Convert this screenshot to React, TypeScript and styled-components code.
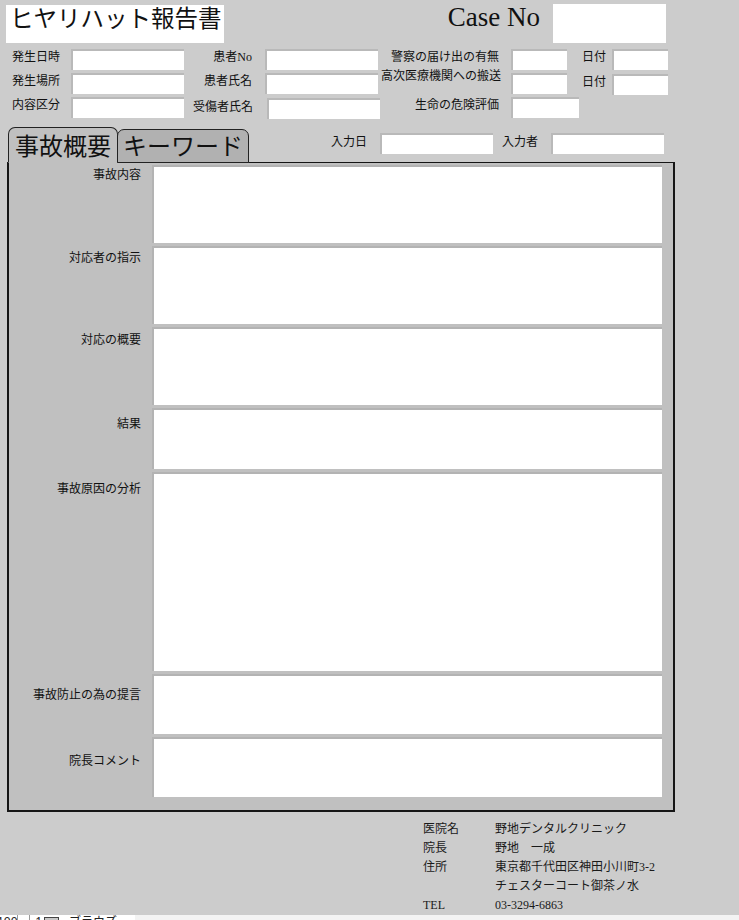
import styled, { createGlobalStyle } from 'styled-components';

const GlobalStyle = createGlobalStyle`
	html, body {
		margin: 0;
		padding: 0;
		height: 920px;
		overflow: hidden;
		background: #cccccc;
	}
	body {
		font-family: "Liberation Serif", "Noto Sans CJK JP", serif;
		color: #111;
	}
`;

const Page = styled.div`
	width: 739px;
	height: 920px;
	overflow: hidden;
`;

const Header = styled.header`
	display: flex;
	align-items: flex-start;
	width: 666px;
	padding-top: 4px;
`;

const TitleBox = styled.h1`
	margin: 1px 0 0 6px;
	width: 218px;
	height: 38px;
	box-sizing: border-box;
	padding: 2px 0 0 4px;
	background: #fff;
	font-size: 23.5px;
	font-weight: normal;
	line-height: 24px;
	white-space: nowrap;
`;

const CaseLabel = styled.span`
	margin-left: auto;
	font-size: 27px;
	line-height: 27px;
	white-space: nowrap;
`;

const CaseBox = styled.div`
	margin-left: 13px;
	width: 113px;
	height: 39px;
	background: #fff;
`;

const FieldGrid = styled.div`
	display: flex;
	flex-direction: column;
	gap: 3px;
	margin-top: 6px;
	padding-left: 12px;
`;

const FieldRow = styled.div`
	display: flex;
	height: 21px;
`;

const Label = styled.span<{ $w: number; $right?: boolean; $pad?: number; $dy?: number }>`
	display: flex;
	justify-content: ${({ $right }) => ($right ? 'flex-end' : 'flex-start')};
	width: ${({ $w }) => $w}px;
	box-sizing: border-box;
	padding-right: ${({ $pad = 0 }) => $pad}px;
	margin-top: ${({ $dy = 0 }) => $dy}px;
	font-size: 12px;
	line-height: 16px;
	white-space: nowrap;
	flex-shrink: 0;
`;

const Input = styled.div<{ $w: number; $dy?: number }>`
	width: ${({ $w }) => $w}px;
	height: 21px;
	margin-top: ${({ $dy = 0 }) => $dy}px;
	box-sizing: border-box;
	background: #fff;
	border-top: 2px solid #b9b9b9;
	border-left: 2px solid #b9b9b9;
	flex-shrink: 0;
`;

const TabRow = styled.div`
	position: relative;
	z-index: 1;
	display: flex;
	align-items: flex-end;
	height: 36px;
	margin-top: 9px;
	margin-bottom: -1px;
	padding-left: 8px;
`;

const Tab = styled.div<{ $active?: boolean; $w: number }>`
	width: ${({ $w }) => $w}px;
	height: ${({ $active }) => ($active ? 36 : 34)}px;
	margin-left: ${({ $active }) => ($active ? 0 : -1)}px;
	box-sizing: border-box;
	padding-top: ${({ $active }) => ($active ? 7 : 5)}px;
	background: ${({ $active }) => ($active ? '#c0c0c0' : '#b1b1b1')};
	border: 1px solid #222;
	border-bottom-color: ${({ $active }) => ($active ? '#c0c0c0' : '#222')};
	border-radius: 7px 7px 0 0;
	text-align: center;
	font-size: 24px;
	line-height: 24px;
	white-space: nowrap;
	flex-shrink: 0;
`;

const TopGroup = styled.div`
	display: flex;
	align-self: flex-start;
	margin-top: 6px;
`;

const Panel = styled.section`
	display: flex;
	flex-direction: column;
	gap: 3px;
	width: 668px;
	margin-left: 7px;
	box-sizing: border-box;
	padding: 2px 11px 13px 0;
	background: #c0c0c0;
	border: 1px solid #151515;
	border-left-width: 2px;
	border-right-width: 2px;
	border-bottom-width: 2px;
`;

const EntryRow = styled.div`
	display: flex;
`;

const EntryLabel = styled.div<{ $dy: number }>`
	width: 143px;
	box-sizing: border-box;
	padding: ${({ $dy }) => $dy}px 11px 0 0;
	text-align: right;
	font-size: 12px;
	line-height: 16px;
	white-space: nowrap;
`;

const EntryBox = styled.div<{ $h: number }>`
	width: 510px;
	height: ${({ $h }) => $h}px;
	box-sizing: border-box;
	background: #fff;
	border-top: 2px solid #b3b3b3;
	border-left: 2px solid #b3b3b3;
`;

const ClinicInfo = styled.dl`
	display: grid;
	grid-template-columns: 72px auto;
	margin: 8px 0 0 423px;
	font-size: 12px;
	line-height: 19px;
	color: #1a1a1a;

	dt, dd {
		margin: 0;
		white-space: nowrap;
	}
`;

const StatusBar = styled.footer`
	display: flex;
	height: 16px;
	background: #f3f3f3;
`;

const StatusLeft = styled.div`
	display: flex;
	align-items: flex-start;
	width: 135px;
	background: #fff;
	font-family: "Noto Sans", "Noto Sans CJK JP", sans-serif;
	font-size: 12px;
	line-height: 14px;
	color: #222;
`;

const StatusItem = styled.span<{ $w: number }>`
	width: ${({ $w }) => $w}px;
	flex-shrink: 0;
	white-space: nowrap;
`;

const StatusSep = styled.span`
	width: 1px;
	height: 16px;
	background: #9a9a9a;
	flex-shrink: 0;
`;

const PageBox = styled.span`
	width: 13px;
	height: 12px;
	margin: 2px 10px 0 2px;
	background: #c8c8c8;
	border: 1px solid #444;
	flex-shrink: 0;
`;

const entries = [
	{ label: '事故内容', h: 78, dy: 2 },
	{ label: '対応者の指示', h: 78, dy: 4 },
	{ label: '対応の概要', h: 78, dy: 5 },
	{ label: '結果', h: 61, dy: 8 },
	{ label: '事故原因の分析', h: 199, dy: 9 },
	{ label: '事故防止の為の提言', h: 60, dy: 13 },
	{ label: '院長コメント', h: 60, dy: 16 },
];

export default function App() {
	return (
		<Page>
			<GlobalStyle />

			<Header>
				<TitleBox>ヒヤリハット報告書</TitleBox>
				<CaseLabel>Case No</CaseLabel>
				<CaseBox />
			</Header>

			<FieldGrid>
				<FieldRow>
					<Label $w={59}>発生日時</Label>
					<Input $w={113} />
					<Label $w={81} $right $pad={13}>患者No</Label>
					<Input $w={113} />
					<Label $w={133} $right $pad={12}>警察の届け出の有無</Label>
					<Input $w={56} />
					<Label $w={45} $right $pad={6}>日付</Label>
					<Input $w={56} />
				</FieldRow>
				<FieldRow>
					<Label $w={59}>発生場所</Label>
					<Input $w={113} />
					<Label $w={81} $right $pad={13}>患者氏名</Label>
					<Input $w={113} />
					<Label $w={133} $right $pad={10} $dy={-5}>高次医療機関への搬送</Label>
					<Input $w={56} />
					<Label $w={45} $right $pad={6} $dy={1}>日付</Label>
					<Input $w={56} $dy={1} />
				</FieldRow>
				<FieldRow>
					<Label $w={59}>内容区分</Label>
					<Input $w={113} />
					<Label $w={83} $right $pad={14} $dy={2}>受傷者氏名</Label>
					<Input $w={113} $dy={1} />
					<Label $w={131} $right $pad={12}>生命の危険評価</Label>
					<Input $w={68} />
				</FieldRow>
			</FieldGrid>

			<TabRow>
				<Tab $active $w={110}>事故概要</Tab>
				<Tab $w={132}>キーワード</Tab>
				<TopGroup>
					<Label $w={131} $right $pad={13} $dy={1}>入力日</Label>
					<Input $w={113} />
					<Label $w={58} $right $pad={13} $dy={1}>入力者</Label>
					<Input $w={113} />
				</TopGroup>
			</TabRow>

			<Panel>
				{entries.map((e) => (
					<EntryRow key={e.label}>
						<EntryLabel $dy={e.dy}>{e.label}</EntryLabel>
						<EntryBox $h={e.h} />
					</EntryRow>
				))}
			</Panel>

			<ClinicInfo>
				<dt>医院名</dt>
				<dd>野地デンタルクリニック</dd>
				<dt>院長</dt>
				<dd>野地　一成</dd>
				<dt>住所</dt>
				<dd>東京都千代田区神田小川町3-2</dd>
				<dt></dt>
				<dd>チェスターコート御茶ノ水</dd>
				<dt>TEL</dt>
				<dd>03-3294-6863</dd>
			</ClinicInfo>

			<StatusBar>
				<StatusLeft>
					<StatusItem $w={20} style={{ marginLeft: -3 }}>100</StatusItem>
					<StatusSep />
					<StatusItem $w={11} />
					<StatusSep />
					<StatusItem $w={12} style={{ textAlign: 'right' }}>1</StatusItem>
					<PageBox />
					<StatusItem $w={50}>ブラウズ</StatusItem>
				</StatusLeft>
			</StatusBar>
		</Page>
	);
}
